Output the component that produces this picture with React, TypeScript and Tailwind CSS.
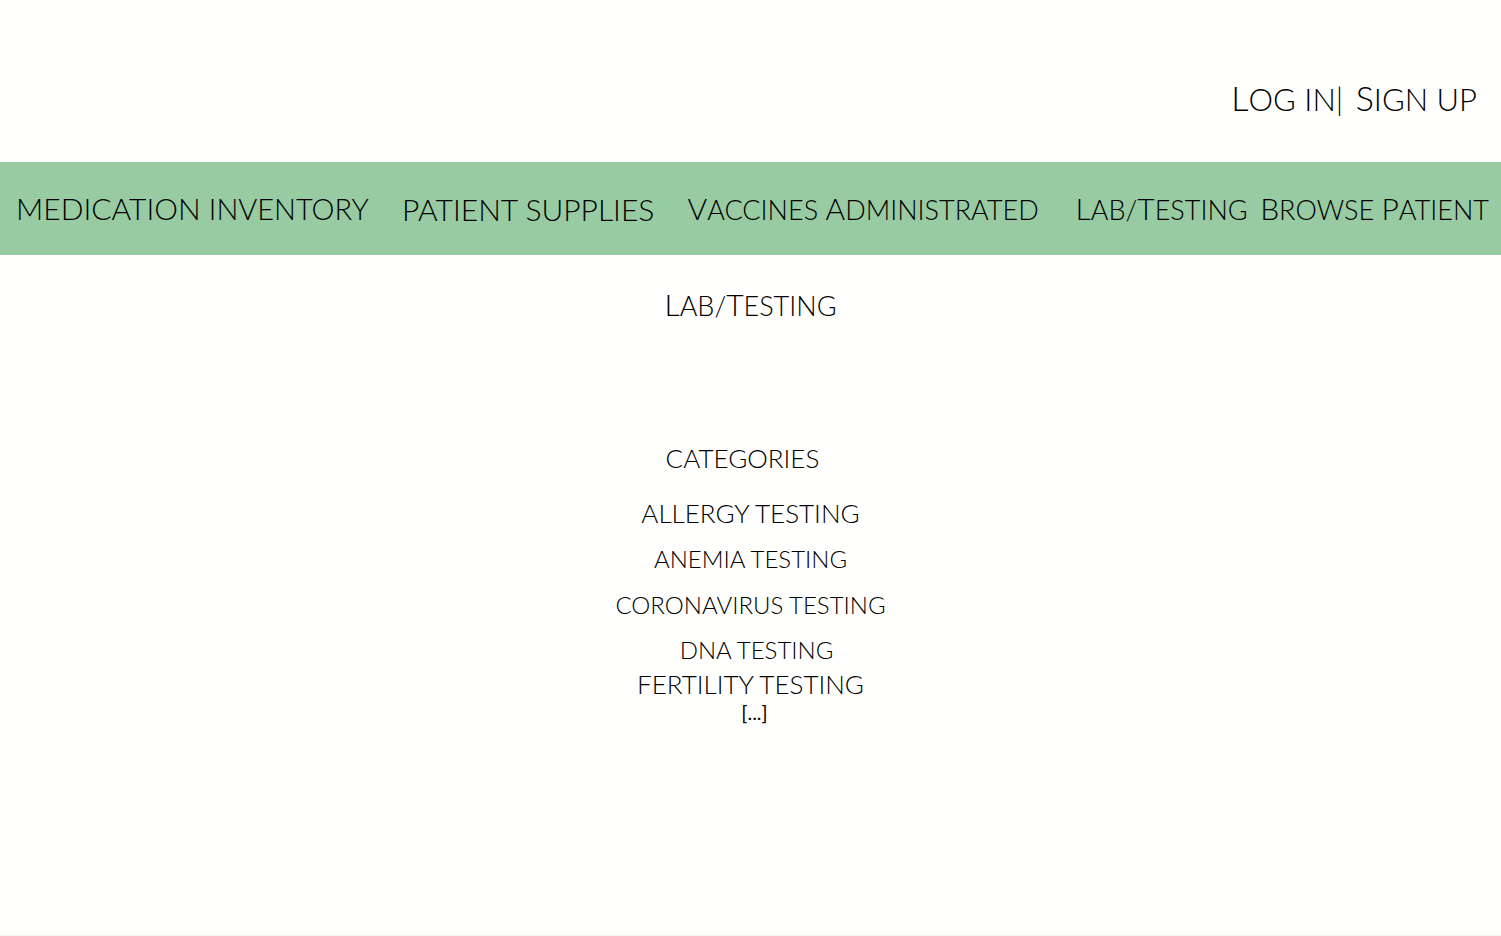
import React from 'react';

type WordsProps = { text: string; lead: string };

// Each word is set in capitals; words that start with a capital get a taller initial.
function Words({ text, lead }: WordsProps) {
  return (
    <>
      {text.split(/(?<=[/ ])/).map((word, i) => (
        <React.Fragment key={i}>
          <span className={`inline-block uppercase ${/^[A-Z]/.test(word) ? lead : ''}`}>{word.trim()}</span>
          {word.endsWith(' ') ? ' ' : ''}
        </React.Fragment>
      ))}
    </>
  );
}

const categories = [
  { name: 'ALLERGY TESTING', style: 'text-[26px] h-[46px]' },
  { name: 'ANEMIA TESTING', style: 'text-[24px] h-[46px]' },
  { name: 'CORONAVIRUS TESTING', style: 'text-[24px] h-[45px]' },
  { name: 'DNA TESTING', style: 'text-[24px] h-[34px] pl-3' },
  { name: 'FERTILITY TESTING', style: 'text-[26px] h-[28px]' },
  { name: '[...]', style: 'text-[20px] h-8 pl-2 font-normal' },
];

export default function App() {
  return (
    <div className="flex min-h-screen flex-col border-b border-[#f3f3f3] bg-[#fffffd] font-['Lato',sans-serif] font-light text-black">
      <header className="flex h-[162px] justify-end whitespace-nowrap pt-[78px] pr-6 text-[31px] leading-10">
        <a href="#login"><Words text="Log in" lead="first-letter:text-[34px]" /></a>
        <span className="mr-1 whitespace-pre">| </span>
        <a href="#signup"><Words text="Sign up" lead="first-letter:text-[34px]" /></a>
      </header>
      <nav className="grid h-[93px] grid-cols-[387fr_286fr_389fr_185fr_226fr] items-center whitespace-nowrap bg-[#98cba2] pr-3 pl-4 text-[27px] leading-10">
        <a href="#medication" className="text-[30px]">MEDICATION <span className="text-[29px]">INVENTORY</span></a>
        <a href="#supplies" className="text-[30px]">PATIENT SUPPLIES</a>
        <a href="#vaccines"><Words text="Vaccines Administrated" lead="first-letter:text-[30px]" /></a>
        <a href="#lab"><Words text="Lab/Testing" lead="first-letter:text-[30px]" /></a>
        <a href="#patients"><Words text="Browse Patient" lead="first-letter:text-[30px]" /></a>
      </nav>
      <main className="flex flex-col items-center pt-[29px] leading-10">
        <h1 className="text-[27px]"><Words text="Lab/Testing" lead="first-letter:text-[30px]" /></h1>
        <h2 className="mt-28 mb-[15px] pr-4 text-[26px]">CATEGORIES</h2>
        <ul className="flex flex-col items-center">
          {categories.map((c) => (
            <li key={c.name} className={c.style}>{c.name}</li>
          ))}
        </ul>
      </main>
    </div>
  );
}
